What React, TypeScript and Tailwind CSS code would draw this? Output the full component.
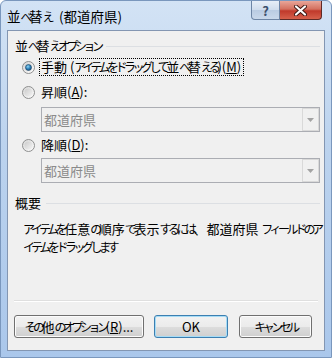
import React from "react";

const font = "font-['Noto_Sans_CJK_JP',sans-serif]";

// kana runs are set narrower, like the proportional kana of Meiryo UI
function J({ t }: { t: string }) {
  const parts = t.split(/([\u3041-\u30ff]+)/);
  return (
    <>
      {parts.map((p, i) =>
        i % 2 ? (
          <span key={i} className="text-[12px] tracking-[-3.5px]">
            {p}
          </span>
        ) : (
          p
        )
      )}
    </>
  );
}

function Radio({ checked }: { checked?: boolean }) {
  return (
    <svg width="13" height="13" viewBox="0 0 13 13" className="shrink-0">
      <defs>
        <linearGradient id="rOuter" x1="0" y1="0" x2="1" y2="1">
          <stop offset="0" stopColor="#d6d6d6" />
          <stop offset="1" stopColor="#ffffff" />
        </linearGradient>
        <linearGradient id="rInner" x1="0" y1="0" x2="1" y2="1">
          <stop offset="0" stopColor="#cbcbcb" />
          <stop offset="1" stopColor="#f4f4f4" />
        </linearGradient>
        <radialGradient id="rDot" cx="0.4" cy="0.35" r="0.7">
          <stop offset="0" stopColor="#8fd6f5" />
          <stop offset="0.55" stopColor="#2a7fb8" />
          <stop offset="1" stopColor="#1b4c74" />
        </radialGradient>
      </defs>
      <circle cx="6.5" cy="6.5" r="6" fill="url(#rOuter)" stroke="#8e8f8f" />
      <circle cx="6.5" cy="6.5" r="4" fill="url(#rInner)" />
      {checked && <circle cx="6.5" cy="6.5" r="3" fill="url(#rDot)" stroke="#1d4466" strokeWidth="0.6" />}
    </svg>
  );
}

function Combo() {
  return (
    <div className="ml-[33px] w-[279px] h-[25px] border border-[#abadb3] bg-[#f0f0f0] flex items-center">
      <span className="flex-1 pl-[2px] text-[#8a8a8a]">都道府県</span>
      <div className="w-[17px] h-[23px] border border-[#d9d9d9] flex items-center justify-center">
        <svg width="7" height="4" viewBox="0 0 7 4">
          <path d="M0 0H7L3.5 4Z" fill="#a3a3a3" />
        </svg>
      </div>
    </div>
  );
}

function GroupLabel({ t }: { t: string }) {
  return (
    <div className="flex items-center h-[16px] pl-[7px] pr-[4px]">
      <span className="whitespace-nowrap">
        <J t={t} />
      </span>
      <div className="flex-1 h-px bg-[#dcdfe3] ml-[5px]" />
    </div>
  );
}

function Button({ children, primary, w }: { children: React.ReactNode; primary?: boolean; w: string }) {
  return (
    <button
      className={
        "h-[23px] rounded-[3px] border flex items-center justify-center bg-[linear-gradient(#f2f2f2_0%,#ebebeb_50%,#dddddd_51%,#cfcfcf_100%)] " +
        w +
        (primary
          ? " border-[#3c7fb1] shadow-[inset_0_0_0_1px_#a6dcf6]"
          : " border-[#707070] shadow-[inset_0_0_0_1px_#fcfcfc]")
      }
    >
      <span className="whitespace-nowrap">{children}</span>
    </button>
  );
}

export default function App() {
  return (
    <div
      className={
        "w-[332px] h-[358px] flex flex-col rounded-t-[6px] border border-[#7a97bd] bg-[linear-gradient(#d3e3f5,#bcd3ee_40%,#aac7eb)] text-[13px] text-black " +
        font
      }
    >
      {/* title bar */}
      <div className="h-[29px] flex items-start shrink-0">
        <div className="pl-[6px] pt-[6px] text-[13.5px] leading-[18px] whitespace-nowrap">
          <J t="並べ替え" />
          <span className="ml-[8px]">(都道府県)</span>
        </div>
        <div className="flex-1" />
        <div className="flex mr-[9px]">
          <div className="w-[29px] h-[19px] border border-t-0 border-[#6d85a5] rounded-bl-[4px] bg-[linear-gradient(#e7eef7,#cfdcec_50%,#b9cbe2_51%,#c9d8eb)] flex items-center justify-center text-[13px] font-bold text-[#3b4f6b] leading-none">
            ?
          </div>
          <div className="w-[42px] h-[19px] border border-t-0 border-l-0 border-[#5e2a26] rounded-br-[4px] bg-[linear-gradient(#e9a699,#d4705f_45%,#c0392b_55%,#d6604b)] flex items-center justify-center">
            <svg width="13" height="11" viewBox="0 0 13 11">
              <path d="M2 1.5L11 9.5M11 1.5L2 9.5" stroke="#3b1612" strokeWidth="4" strokeLinecap="round" />
              <path d="M2 1.5L11 9.5M11 1.5L2 9.5" stroke="#ffffff" strokeWidth="2.2" strokeLinecap="round" />
            </svg>
          </div>
        </div>
      </div>

      {/* client area */}
      <div className="mx-[6px] mb-[6px] flex-1 flex flex-col bg-[#f0f0f0] border border-[#8396b2]">
        <div className="pt-[7px]">
          <GroupLabel t="並べ替えオプション" />
        </div>

        <div className="mt-[3px] h-[20px] flex items-center pl-[14px]">
          <Radio checked />
          <span className="ml-[4px] border border-dotted border-black pl-[1px] pr-[2px] leading-[16px] whitespace-nowrap">
            <J t="手動 (アイテムをドラッグして並べ替える)(" />
            <span className="underline">M</span>)
          </span>
        </div>

        <div className="mt-[5px] h-[20px] flex items-center pl-[14px]">
          <Radio />
          <span className="ml-[6px]">
            昇順(<span className="underline">A</span>):
          </span>
        </div>

        <div className="mt-[5px]">
          <Combo />
        </div>

        <div className="mt-[3px] h-[20px] flex items-center pl-[14px]">
          <Radio />
          <span className="ml-[6px]">
            降順(<span className="underline">D</span>):
          </span>
        </div>

        <div className="mt-[3px]">
          <Combo />
        </div>

        <div className="mt-[12px]">
          <GroupLabel t="概要" />
        </div>

        <div className="mt-[9px] pl-[15px] leading-[18px] whitespace-nowrap">
          <J t="アイテムを任意の順序で表示するには、都道府県 フィールドのア" />
          <br />
          <J t="イテムをドラッグします" />
        </div>

        <div className="flex-1" />

        <div className="mx-[6px] h-px bg-[#dfdfdf] border-b border-white box-content" />

        <div className="mt-[13px] mb-[12px] flex pl-[6px]">
          <Button w="w-[130px]">
            <J t="その他のオプション(" />
            <span className="underline">R</span>)...
          </Button>
          <Button w="w-[74px] ml-[10px]" primary>
            OK
          </Button>
          <Button w="w-[73px] ml-[11px]">
            <J t="キャンセル" />
          </Button>
        </div>
      </div>
    </div>
  );
}
